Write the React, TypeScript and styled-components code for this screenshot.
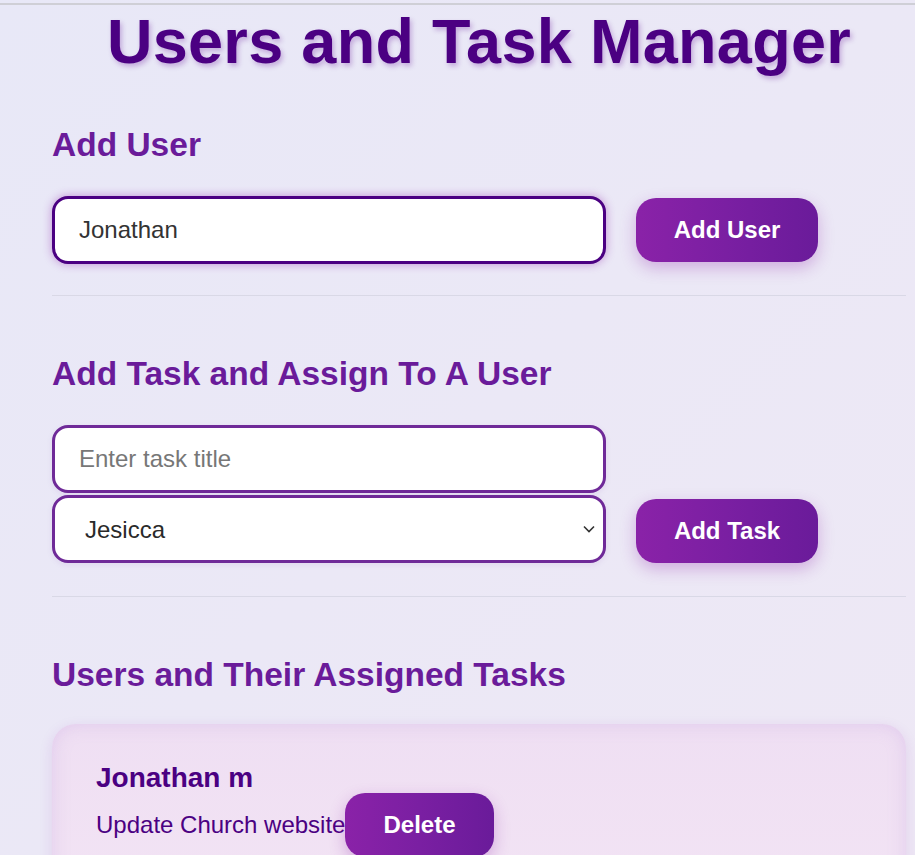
import React from "react";
import styled, { createGlobalStyle, css } from "styled-components";

const GlobalStyle = createGlobalStyle`
  html, body {
    margin: 0;
    padding: 0;
  }
  body {
    font-family: "Liberation Sans", Arial, sans-serif;
    background: linear-gradient(135deg, #e8e8f7 0%, #ebe8f6 50%, #eee8f5 100%);
    min-height: 855px;
    overflow: hidden;
  }
`;

const Page = styled.div`
  margin-top: 3px;
  border-top: 2px solid #cfcfd6;
  padding: 0 9px 0 52px;
  min-height: 850px;
`;

const Title = styled.h1`
  margin: 0 0 47px;
  text-align: center;
  font-size: 63px;
  font-weight: 700;
  letter-spacing: 0.3px;
  color: #4b0082;
  text-shadow: 2px 3px 5px rgba(106, 27, 154, 0.3);
  line-height: 72px;
`;

const Section = styled.section`
  display: flex;
  flex-direction: column;
`;

const Heading = styled.h2<{ $tight?: boolean }>`
  margin: 0 0 ${(p) => (p.$tight ? 31 : 33)}px;
  padding-top: 2px;
  font-size: 33.5px;
  font-weight: 700;
  color: #6a1b9a;
  line-height: 37px;
`;

const FormRow = styled.div`
  display: flex;
  align-items: flex-end;
  gap: 30px;
`;

const FieldStack = styled.div`
  display: flex;
  flex-direction: column;
  gap: 2px;
  padding-bottom: 2px;
  width: 554px;
`;

const fieldBase = css<{ $focused?: boolean }>`
  box-sizing: border-box;
  width: 554px;
  height: 68px;
  border-radius: 16px;
  border: 3px solid ${(p) => (p.$focused ? "#4b0082" : "#6f2a98")};
  background: #ffffff;
  font-family: "Liberation Sans", Arial, sans-serif;
  font-size: 24px;
  color: #333333;
  outline: none;
  box-shadow: ${(p) =>
    p.$focused
      ? "0 0 10px rgba(142, 36, 170, 0.45)"
      : "0 2px 6px rgba(106, 27, 154, 0.08)"};
`;

const TextInput = styled.input<{ $focused?: boolean }>`
  ${fieldBase}
  padding: 0 24px;
  &::placeholder {
    color: #777777;
  }
`;

const Select = styled.select`
  ${fieldBase}
  padding: 0 14px 0 30px;
  color: #2a2a2a;
  appearance: none;
  background-image: url("data:image/svg+xml;utf8,<svg xmlns='http://www.w3.org/2000/svg' width='12' height='8' viewBox='0 0 12 8'><path d='M1 1.5 L6 6.5 L11 1.5' fill='none' stroke='%23333' stroke-width='1.6'/></svg>");
  background-repeat: no-repeat;
  background-position: right 8px center;
`;

const PrimaryButton = styled.button`
  box-sizing: border-box;
  height: 64px;
  padding: 0 38px;
  border: none;
  border-radius: 20px;
  background: linear-gradient(90deg, #8a22a8 0%, #7a1fa2 50%, #6a1b9a 100%);
  color: #ffffff;
  font-family: "Liberation Sans", Arial, sans-serif;
  font-size: 24px;
  font-weight: 700;
  cursor: pointer;
  box-shadow: 0 6px 16px rgba(142, 36, 170, 0.3);
`;

const RowButton = styled(PrimaryButton)`
  margin-bottom: 2px;
  width: 182px;
  padding: 0;
`;

const Divider = styled.hr`
  border: none;
  height: 1px;
  background: #d9d8e6;
  margin: 31px 0 57px;
`;

const Card = styled.div`
  border-radius: 24px;
  background: linear-gradient(180deg, #efdff3 0%, #f2e3f4 100%);
  box-shadow: 0 4px 14px rgba(142, 36, 170, 0.12),
    inset 0 0 18px rgba(180, 140, 220, 0.25);
  padding: 38px 44px 30px;
`;

const UserName = styled.h3`
  margin: 0;
  font-size: 28px;
  line-height: 31px;
  font-weight: 700;
  color: #4b0082;
`;

const TaskItem = styled.div`
  font-size: 24px;
  color: #4b0082;
`;

const DeleteButton = styled(PrimaryButton)`
  vertical-align: baseline;
`;

export default function App() {
  return (
    <>
      <GlobalStyle />
      <Page>
        <Title>Users and Task Manager</Title>

        <Section>
          <Heading>Add User</Heading>
          <FormRow>
            <TextInput $focused defaultValue="Jonathan" />
            <RowButton>Add User</RowButton>
          </FormRow>
        </Section>

        <Divider />

        <Section>
          <Heading>Add Task and Assign To A User</Heading>
          <FormRow>
            <FieldStack>
              <TextInput placeholder="Enter task title" />
              <Select defaultValue="Jesicca">
                <option>Jonathan</option>
                <option>Jesicca</option>
              </Select>
            </FieldStack>
            <RowButton>Add Task</RowButton>
          </FormRow>
        </Section>

        <Divider />

        <Section>
          <Heading $tight>Users and Their Assigned Tasks</Heading>
          <Card>
            <UserName>Jonathan m</UserName>
            <TaskItem>
              Update Church website
              <DeleteButton>Delete</DeleteButton>
            </TaskItem>
          </Card>
        </Section>
      </Page>
    </>
  );
}
